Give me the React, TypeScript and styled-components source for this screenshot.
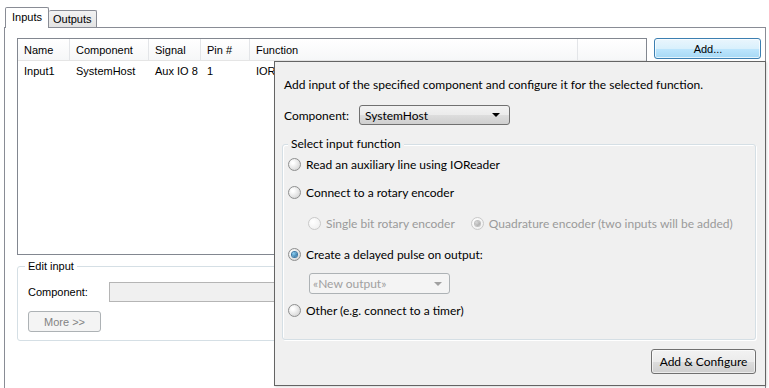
import React from "react";
import styled, { createGlobalStyle, css } from "styled-components";

const GlobalStyle = createGlobalStyle`
  html, body {
    margin: 0;
    padding: 0;
    background: #ffffff;
    overflow: hidden;
  }
  * {
    box-sizing: border-box;
  }
`;

const formFont = `"Liberation Sans", Arial, sans-serif`;
const popupFont = `Lato, "Open Sans", sans-serif`;

const columns = [
  { title: "Name", width: 52 },
  { title: "Component", width: 79 },
  { title: "Signal", width: 52 },
  { title: "Pin #", width: 49 },
  { title: "Function", width: 328 },
];

const rows = [["Input1", "SystemHost", "Aux IO 8", "1", "IOReader"]];

const App = () => {
  return (
    <>
      <GlobalStyle />
      <Window>
        <TabStrip>
          <Tab $active>Inputs</Tab>
          <Tab>Outputs</Tab>
        </TabStrip>
        <TabPage>
          <TopRow>
            <ListBox>
              <HeaderRow>
                {columns.map((c) => (
                  <HeaderCell key={c.title} style={{ width: c.width }}>
                    {c.title}
                  </HeaderCell>
                ))}
                <HeaderFill />
              </HeaderRow>
              {rows.map((r) => (
                <ListRow key={r[0]}>
                  {r.map((v, i) => (
                    <ListCell key={i} style={{ width: columns[i].width }}>
                      {v}
                    </ListCell>
                  ))}
                </ListRow>
              ))}
            </ListBox>
            <FocusButton>Add...</FocusButton>
          </TopRow>

          <EditGroup>
            <EditLegend>Edit input</EditLegend>
            <EditRow>
              <FormLabel>Component:</FormLabel>
              <DisabledBox />
            </EditRow>
            <MoreButton>More &gt;&gt;</MoreButton>
          </EditGroup>
        </TabPage>

        <Popup>
          <Description>
            Add input of the specified component and configure it for the selected function.
          </Description>
          <ComponentRow>
            <PopupLabel>Component:</PopupLabel>
            <Combo>
              <span>SystemHost</span>
              <Arrow />
            </Combo>
          </ComponentRow>

          <FunctionGroup>
            <GroupLegend>Select input function</GroupLegend>
            <RadioRow $top={10}>
              <Radio />
              <RadioText>Read an auxiliary line using IOReader</RadioText>
            </RadioRow>
            <RadioRow $top={10}>
              <Radio />
              <RadioText>Connect to a rotary encoder</RadioText>
            </RadioRow>
            <SubRow>
              <RadioRow $top={0}>
                <Radio $disabled />
                <RadioText $disabled>Single bit rotary encoder</RadioText>
              </RadioRow>
              <RadioRow $top={0}>
                <Radio $disabled $checked />
                <RadioText $disabled>Quadrature encoder (two inputs will be added)</RadioText>
              </RadioRow>
            </SubRow>
            <RadioRow $top={13}>
              <Radio $checked />
              <RadioText>Create a delayed pulse on output:</RadioText>
            </RadioRow>
            <OutputCombo>
              <span>«New output»</span>
              <Arrow $disabled />
            </OutputCombo>
            <RadioRow $top={7}>
              <Radio />
              <RadioText>Other (e.g. connect to a timer)</RadioText>
            </RadioRow>
          </FunctionGroup>

          <Footer>
            <PushButton>Add &amp; Configure</PushButton>
          </Footer>
        </Popup>
      </Window>
    </>
  );
};

export default App;

const Window = styled.div`
  position: relative;
  width: 769px;
  height: 388px;
  background: #ffffff;
  font-family: ${formFont};
  font-size: 11px;
  color: #000;
`;

const TabStrip = styled.div`
  display: flex;
  align-items: flex-end;
  height: 27px;
  padding-left: 5px;
`;

const Tab = styled.div<{ $active?: boolean }>`
  height: ${(p) => (p.$active ? "21px" : "17px")};
  padding: ${(p) => (p.$active ? "3px 6px 0 6px" : "2px 4px 0 4px")};
  border: 1px solid #898c95;
  border-bottom: none;
  border-radius: 2px 2px 0 0;
  margin-bottom: ${(p) => (p.$active ? "-1px" : "0")};
  background: ${(p) =>
    p.$active ? "#ffffff" : "linear-gradient(#f2f2f2, #e3e3e3)"};
  position: relative;
  z-index: ${(p) => (p.$active ? 1 : 0)};
  ${(p) =>
    !p.$active &&
    css`
      border-left: none;
    `}
`;

const TabPage = styled.div`
  margin-left: 4px;
  width: 762px;
  height: 362px;
  border: 1px solid #898c95;
  background: #ffffff;
  padding: 10px 0 0 12px;
`;

const TopRow = styled.div`
  display: flex;
  align-items: flex-start;
  gap: 7px;
`;

const ListBox = styled.div`
  width: 630px;
  height: 217px;
  border: 1px solid #828790;
  background: #ffffff;
`;

const HeaderRow = styled.div`
  display: flex;
  height: 22px;
  background: linear-gradient(#ffffff, #f6f7f8);
  border-bottom: 1px solid #e5e5e5;
`;

const HeaderCell = styled.div`
  flex: none;
  padding: 1px 6px 0 6px;
  line-height: 20px;
  border-right: 1px solid #e3e5e8;
  white-space: nowrap;
  overflow: hidden;
`;

const HeaderFill = styled.div`
  flex: 1;
`;

const ListRow = styled.div`
  display: flex;
  height: 20px;
`;

const ListCell = styled.div`
  flex: none;
  padding: 0 6px;
  line-height: 20px;
  white-space: nowrap;
  overflow: hidden;
`;

const FocusButton = styled.div`
  width: 107px;
  height: 21px;
  border: 1px solid #3c7fb1;
  border-radius: 3px;
  background: linear-gradient(#eaf6fd 0%, #d9f0fc 50%, #bee6fd 51%, #a7d9f5 100%);
  box-shadow: inset 0 0 0 1px rgba(255, 255, 255, 0.7);
  display: flex;
  align-items: center;
  justify-content: center;
  padding-left: 1px;
`;

const EditGroup = styled.div`
  position: relative;
  margin-top: 11px;
  width: 630px;
  height: 75px;
  border: 1px solid #d5dfe5;
  border-radius: 3px;
  padding: 15px 0 0 10px;
`;

const EditLegend = styled.div`
  position: absolute;
  top: -7px;
  left: 7px;
  padding: 0 3px;
  background: #ffffff;
  line-height: 13px;
`;

const EditRow = styled.div`
  display: flex;
  align-items: center;
  gap: 24px;
`;

const FormLabel = styled.div`
  width: 57px;
`;

const DisabledBox = styled.div`
  width: 300px;
  height: 20px;
  border: 1px solid #b5b5b5;
  background: #f0f0f0;
`;

const MoreButton = styled.div`
  margin-top: 9px;
  width: 73px;
  height: 21px;
  border: 1px solid #adb2b5;
  border-radius: 3px;
  background: #f4f4f4;
  color: #838383;
  display: flex;
  align-items: center;
  justify-content: center;
`;

const Popup = styled.div`
  position: absolute;
  left: 274px;
  top: 61px;
  width: 492px;
  height: 325px;
  background: #f0f0f0;
  border: 1px solid #646464;
  box-shadow: 1px 1px 2px rgba(0, 0, 0, 0.15);
  font-family: ${popupFont};
  font-size: 12px;
  color: #000;
  display: flex;
  flex-direction: column;
  padding: 15px 9px 0 7px;
`;

const Description = styled.div`
  line-height: 16px;
  padding-left: 2px;
`;

const ComponentRow = styled.div`
  display: flex;
  align-items: center;
  gap: 9px;
  margin-top: 12px;
  padding-left: 2px;
`;

const PopupLabel = styled.div`
  width: 66px;
`;

const Combo = styled.div`
  width: 151px;
  height: 20px;
  border: 1px solid #707070;
  border-radius: 3px;
  background: linear-gradient(#f2f2f2 0%, #ebebeb 50%, #dddddd 51%, #cfcfcf 100%);
  display: flex;
  align-items: center;
  justify-content: space-between;
  padding: 0 9px 0 5px;
`;

const Arrow = styled.div<{ $disabled?: boolean }>`
  width: 0;
  height: 0;
  border-left: 4px solid transparent;
  border-right: 4px solid transparent;
  border-top: 4px solid ${(p) => (p.$disabled ? "#a0a0a0" : "#000")};
`;

const FunctionGroup = styled.div`
  position: relative;
  margin-top: 19px;
  width: 474px;
  height: 196px;
  border: 1px solid #d5dfe5;
  border-radius: 3px;
  box-shadow: 1px 1px 0 #ffffff inset, 1px 1px 0 #ffffff;
  padding: 0 0 0 5px;
`;

const GroupLegend = styled.div`
  position: absolute;
  top: -9px;
  left: 5px;
  padding: 0 3px;
  background: #f0f0f0;
  line-height: 16px;
`;

const RadioRow = styled.div<{ $top: number }>`
  display: flex;
  align-items: center;
  gap: 5px;
  height: 18px;
  margin-top: ${(p) => p.$top}px;
`;

const Radio = styled.div<{ $checked?: boolean; $disabled?: boolean }>`
  flex: none;
  width: 13px;
  height: 13px;
  border-radius: 50%;
  border: 1px solid ${(p) => (p.$disabled ? "#c9c9c9" : "#8e8f8f")};
  background: ${(p) =>
    p.$disabled
      ? "radial-gradient(circle at 35% 35%, #ffffff, #ececec)"
      : "radial-gradient(circle at 35% 35%, #ffffff 10%, #e2e2e2 60%, #c9c9c9)"};
  display: flex;
  align-items: center;
  justify-content: center;
  &::after {
    content: "";
    display: ${(p) => (p.$checked ? "block" : "none")};
    width: 5px;
    height: 5px;
    border-radius: 50%;
    background: ${(p) =>
      p.$disabled
        ? "radial-gradient(circle at 35% 35%, #d8d8d8, #9a9a9a)"
        : "radial-gradient(circle at 35% 35%, #8ad1f5, #1c5a8c)"};
    box-shadow: 0 0 0 1px ${(p) => (p.$disabled ? "#c0c0c0" : "#3d7aa7")};
  }
`;

const RadioText = styled.div<{ $disabled?: boolean }>`
  white-space: nowrap;
  color: ${(p) => (p.$disabled ? "#9a9a9a" : "#000")};
`;

const SubRow = styled.div`
  display: flex;
  align-items: center;
  gap: 16px;
  margin-top: 13px;
  padding-left: 20px;
`;

const OutputCombo = styled.div`
  margin: 10px 0 0 21px;
  width: 141px;
  height: 21px;
  border: 1px solid #adb2b5;
  border-radius: 3px;
  background: #f4f4f4;
  color: #a0a0a0;
  display: flex;
  align-items: center;
  justify-content: space-between;
  padding: 0 7px 0 3px;
`;

const Footer = styled.div`
  display: flex;
  justify-content: flex-end;
  margin-top: 9px;
`;

const PushButton = styled.div`
  width: 105px;
  height: 25px;
  border: 1px solid #707070;
  border-radius: 3px;
  background: linear-gradient(#f2f2f2 0%, #ebebeb 50%, #dddddd 51%, #cfcfcf 100%);
  box-shadow: inset 0 0 0 1px rgba(255, 255, 255, 0.6);
  display: flex;
  align-items: center;
  justify-content: center;
`;
